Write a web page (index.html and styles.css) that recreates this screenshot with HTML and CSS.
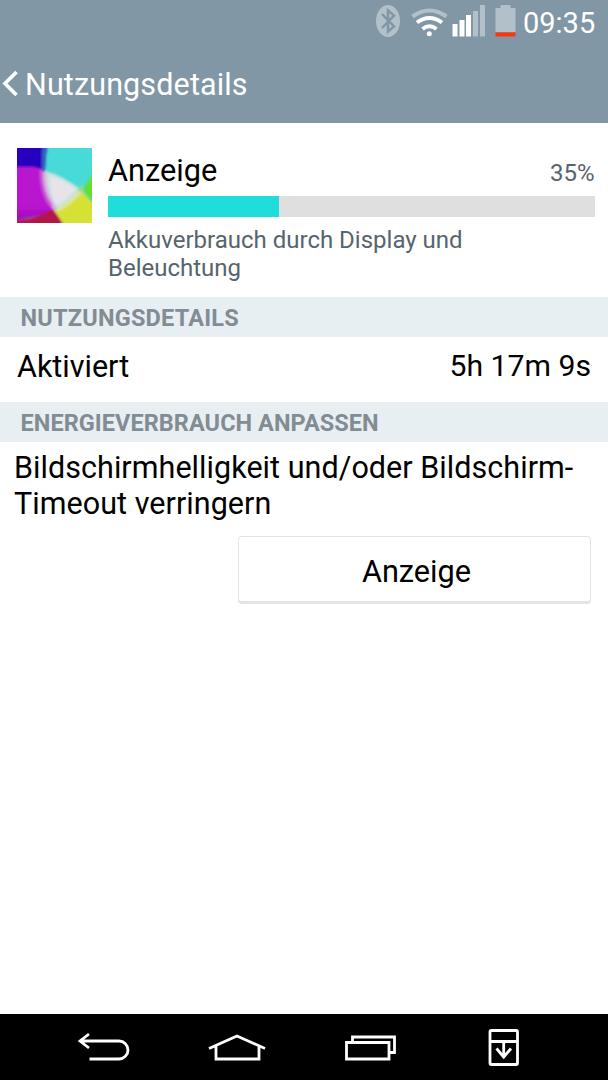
FILE: index.html
```html
<!DOCTYPE html>
<html lang="de">
<head>
<meta charset="utf-8">
<title>Nutzungsdetails</title>
<link rel="stylesheet" href="styles.css">
</head>
<body>
<div class="screen">
  <header class="header">
    <div class="status">
      <svg class="status-icons" width="148" height="44" viewBox="372 0 148 44">
        <ellipse cx="388" cy="21" rx="12" ry="16" fill="#b1c0c9"/>
        <path d="M382 14L394 26.500L388 31.500V10.500L394 15.500L382 28" fill="none" stroke="#8197a5" stroke-width="2.500"/>
        <g fill="none" stroke-width="4">
          <path d="M412.500 16.500Q429.500 4.500 446.500 16.500" stroke="#b1c0c9"/>
          <path d="M417 22.500Q429.500 13.500 442 22.500" stroke="#fff"/>
          <path d="M422.500 29Q429.500 23.500 436.500 29" stroke="#fff"/>
        </g>
        <circle cx="429.300" cy="33.700" r="2.500" fill="#fff"/>
        <path d="M452.500 24h5v12.500h-5zM459.500 20h5v16.500h-5zM466 15h5v21.500h-5z" fill="#fff"/>
        <path d="M473 11h5v25.500h-5zM480 5h5v31.500h-5z" fill="#b1c0c9"/>
        <path d="M495.500 8h5V5h10v3h5v24h-20z" fill="#b1c0c9"/>
        <path d="M495.500 32.500h20v4h-20z" fill="#fd350b"/>
      </svg>
      <span class="clock">09:35</span>
    </div>
    <div class="titlebar">
      <svg class="chevron" width="22" height="34" viewBox="0 66 22 34"><path d="M16.500 71L5 82.500L16.500 94" fill="none" stroke="#fff" stroke-width="3.600"/></svg>
      <h1 class="title">Nutzungsdetails</h1>
    </div>
  </header>
  <main class="content">
    <section class="usage">
      <svg class="usage-icon" width="75" height="75" viewBox="0 0 75 75">
        <defs>
          <filter id="soft" x="-10%" y="-10%" width="120%" height="120%"><feGaussianBlur stdDeviation="1"/></filter>
          <clipPath id="tile"><path d="M0 0h75v75H0z"/></clipPath>
          <linearGradient id="violet" x1="0" y1="0" x2="0" y2="1"><stop offset=".7" stop-color="#b914cf"/><stop offset="1" stop-color="#a00db9"/></linearGradient>
        </defs>
        <g clip-path="url(#tile)">
          <path d="M0 0h75v75H0z" fill="#48dad8"/>
          <g filter="url(#soft)">
            <path d="M-5-5H31Q28 10 28 23L0 20H-5z" fill="#2505be"/>
            <path d="M26-5h5Q28 8 28 23h-3Q24 8 26-5z" fill="#315fc2"/>
            <path d="M-5 19H17Q24 20 28 24Q27 47 38 63Q20 69-5 73z" fill="url(#violet)"/>
            <path d="M-5 73Q20 71 36 61L50 80H-5z" fill="#b31649"/>
            <path d="M80 18L66 42L80 59z" fill="#62df32"/>
            <path d="M37 62L64 42L80 60V80H49z" fill="#d5e235"/>
            <path d="M28 23Q45 27 66 43Q51 60 39 62Q27 45 28 23z" fill="#c9e4df"/>
            <path d="M27 24Q27 47 39 62" fill="none" stroke="#dda8e1" stroke-width="4"/>
            <path d="M24 22Q24 45 34 58" fill="none" stroke="#c457d3" stroke-width="3"/>
            <path d="M33 28Q45 31 59 41Q49 53 39 57Q33 43 33 28z" fill="#e6e4e9"/>
            <path d="M40 62Q51 57 64 43" fill="none" stroke="#dce4a2" stroke-width="4"/>
            <path d="M60 42L65 36L68 46" fill="#8edb91"/>
          </g>
        </g>
      </svg>
      <div class="usage-body">
        <div class="usage-head"><span class="usage-name">Anzeige</span><span class="percent">35%</span></div>
        <div class="bar"><div class="bar-fill" style="width:35.100%"></div></div>
        <p class="description">Akkuverbrauch durch Display und Beleuchtung</p>
      </div>
    </section>
    <h2 class="section-title section-title-short">NUTZUNGSDETAILS</h2>
    <div class="row"><span>Aktiviert</span><span class="duration">5h 17m 9s</span></div>
    <h2 class="section-title">ENERGIEVERBRAUCH ANPASSEN</h2>
    <p class="hint">Bildschirmhelligkeit und/oder Bildschirm-<br>Timeout verringern</p>
    <button class="action">Anzeige</button>
  </main>
  <nav class="nav">
    <svg width="608" height="66" viewBox="0 1014 608 66" fill="none" stroke="#fff" stroke-width="2.800">
      <path d="M89.500 1059H119A9 9 0 0 0 119 1041H81M89 1034L80 1041L89 1048"/>
      <path d="M209 1048.500L237 1036L265 1048.500M216 1046V1059H259V1046"/>
      <path d="M346.500 1042.500h42.500v16.500h-42.500zM352.500 1042V1037H394.500V1052.500H389"/>
      <rect x="490" y="1030.500" width="27.500" height="34" rx="1.500"/>
      <path d="M490 1041.500H517.500M503.700 1042V1057M496.500 1048.500L503.700 1057L511 1048.500"/>
    </svg>
  </nav>
</div>
</body>
</html>
```
FILE: styles.css
```css
* { box-sizing: border-box; }
body { margin: 0; background: #fff; font-family: Roboto, "Liberation Sans", sans-serif; color: #000; }
h1, h2, p { margin: 0; font-weight: 400; }
svg { display: block; flex: none; }
.screen { width: 608px; height: 1080px; display: flex; flex-direction: column; overflow: hidden; }
.header { height: 123px; background: #8197a5; color: #fff; flex: none; }
.status { height: 44px; display: flex; justify-content: flex-end; padding-right: 12px; }
.status-icons { margin-right: 3px; }
.clock { width: 73px; font-size: 29px; line-height: 46px; white-space: nowrap; }
.titlebar { height: 79px; display: flex; align-items: center; }
.chevron { margin-right: 3px; }
.title { font-size: 30.500px; line-height: 79px; padding-top: 1px; letter-spacing: .13px; white-space: nowrap; }
.content { flex: 1; display: flex; flex-direction: column; background: #fff; }
.usage { height: 173.500px; padding: 25px 13.500px 0 16.500px; display: flex; gap: 16.500px; flex: none; }
.usage-body { flex: 1; }
.usage-head { height: 48px; display: flex; justify-content: space-between; align-items: baseline; }
.usage-name { font-size: 30.700px; line-height: 46px; }
.percent { font-size: 24px; color: #56646d; }
.bar { height: 20.500px; background: #dfdfdf; }
.bar-fill { height: 100%; background: #20dddc; }
.description { width: 380px; padding-top: 10.500px; font-size: 24px; line-height: 27.500px; color: #56646d; }
.section-title { height: 40.500px; padding-left: 20.500px; background: #e8eff3; color: #828c93; font-size: 23.500px; line-height: 42px; letter-spacing: .05px; font-weight: 700; flex: none; white-space: nowrap; }
.section-title-short { letter-spacing: .2px; }
.row { height: 64.500px; padding: 0 17px; display: flex; justify-content: space-between; font-size: 30.500px; line-height: 59px; flex: none; }
.duration { font-size: 30.200px; line-height: 58px; }
.hint { padding: 7.500px 0 0 14px; font-size: 30.500px; letter-spacing: .05px; line-height: 36px; white-space: nowrap; }
.action { width: 353px; height: 68px; margin: 14px 17px 0 auto; padding: 5px 0 0 4px; align-self: flex-end; flex: none; border: 1.500px solid #e1e4e4; border-bottom-width: 3px; border-radius: 4px; background: #fff; font: 30.700px/60px Roboto, sans-serif; color: #000; }
.nav { height: 66px; background: #000; flex: none; }
```
